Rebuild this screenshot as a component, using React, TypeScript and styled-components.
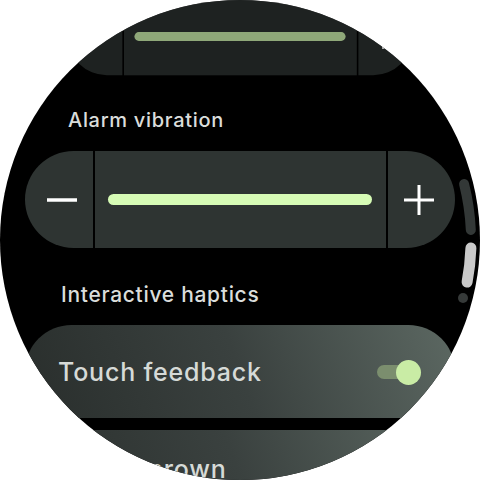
import React from 'react'
import styled, { createGlobalStyle } from 'styled-components'

const GlobalStyle = createGlobalStyle`
  html, body {
    margin: 0;
    padding: 0;
    background: #ffffff;
  }
  * {
    box-sizing: border-box;
  }
`

const Screen = styled.div`
  position: relative;
  width: 480px;
  height: 480px;
  border-radius: 50%;
  overflow: hidden;
  background: #000000;
  font-family: Inter, Roboto, 'Noto Sans', sans-serif;
`

const Column = styled.div`
  display: flex;
  flex-direction: column;
  margin-top: -12px;
  padding: 0 25px;
`

const Slider = styled.div<{ $scale?: number; $dim?: boolean }>`
  display: grid;
  grid-template-columns: 68px 1fr 67px;
  column-gap: 2px;
  height: 97px;
  transform: scale(${(p) => p.$scale ?? 1});
  opacity: ${(p) => (p.$dim ? 0.67 : 1)};
`

const SideButton = styled.div<{ $side: 'left' | 'right' }>`
  display: flex;
  align-items: center;
  justify-content: center;
  background: #2e3432;
  border-radius: ${(p) => (p.$side === 'left' ? '49px 0 0 49px' : '0 49px 49px 0')};
  padding: ${(p) => (p.$side === 'left' ? '0 0 0 6px' : '0 6px 0 0')};
`

const Track = styled.div`
  display: flex;
  align-items: center;
  background: #2e3432;
  padding: 0 14px 0 13px;
`

const Bar = styled.div`
  flex: 1;
  height: 11px;
  border-radius: 6px;
  background: #d6fbb5;
`

const SectionLabel = styled.div<{ $indent: number; $top: number; $bottom: number; $size: number }>`
  padding: ${(p) => `${p.$top}px 0 ${p.$bottom}px ${p.$indent - 25}px`};
  font-size: ${(p) => p.$size}px;
  font-weight: 500;
  line-height: 24px;
  color: #dadddb;
  letter-spacing: 0.7px;
`

const Chip = styled.div<{ $top?: number }>`
  display: flex;
  align-items: ${(p) => (p.$top ? 'flex-start' : 'center')};
  justify-content: space-between;
  height: 93px;
  border-radius: 47px;
  padding: ${(p) => (p.$top ? `${p.$top}px 40px 0 33px` : '0 40px 0 33px')};
  background: linear-gradient(70deg, #292e2c 0%, #3a413f 50%, #5c6862 100%);
`

const ChipLabel = styled.span`
  font-size: 25px;
  font-weight: 500;
  line-height: 30px;
  color: #d6dad7;
  letter-spacing: 0.8px;
`

const Gap = styled.div`
  height: 12px;
`

const Toggle = styled.div`
  position: relative;
  width: 38px;
  height: 14px;
  border-radius: 7px;
  background: #7b8e6e;
`

const Thumb = styled.div`
  position: absolute;
  right: -6px;
  top: -5px;
  width: 25px;
  height: 25px;
  border-radius: 50%;
  background: #c9eca5;
`

const Indicator = styled.svg`
  position: absolute;
  left: 0;
  top: 0;
  pointer-events: none;
`

const arcPoint = (deg: number, r = 231) => {
  const a = (deg * Math.PI) / 180
  return `${(240 + r * Math.cos(a)).toFixed(1)} ${(240 + r * Math.sin(a)).toFixed(1)}`
}

const arc = (from: number, to: number) => `M ${arcPoint(from)} A 231 231 0 0 1 ${arcPoint(to)}`

const Minus = () => (
  <svg width="32" height="32" viewBox="0 0 32 32">
    <line x1="1" y1="16" x2="31" y2="16" stroke="#ffffff" strokeWidth="3.5" />
  </svg>
)

const Plus = () => (
  <svg width="32" height="32" viewBox="0 0 32 32">
    <line x1="1" y1="16" x2="31" y2="16" stroke="#ffffff" strokeWidth="3" />
    <line x1="16" y1="1" x2="16" y2="31" stroke="#ffffff" strokeWidth="3" />
  </svg>
)

const LevelSlider: React.FC<{ scale?: number; dim?: boolean }> = ({ scale, dim }) => (
  <Slider $scale={scale} $dim={dim}>
    <SideButton $side="left">
      <Minus />
    </SideButton>
    <Track>
      <Bar />
    </Track>
    <SideButton $side="right">
      <Plus />
    </SideButton>
  </Slider>
)

export default function App() {
  return (
    <>
      <GlobalStyle />
      <Screen>
        <Column>
          <LevelSlider scale={0.8} dim />
          <SectionLabel $indent={68} $top={23} $bottom={19} $size={20}>
            Alarm vibration
          </SectionLabel>
          <LevelSlider />
          <SectionLabel $indent={61} $top={35} $bottom={18} $size={21}>
            Interactive haptics
          </SectionLabel>
          <Chip>
            <ChipLabel>Touch feedback</ChipLabel>
            <Toggle>
              <Thumb />
            </Toggle>
          </Chip>
          <Gap />
          <Chip $top={24}>
            <ChipLabel>Rotary crown</ChipLabel>
          </Chip>
        </Column>
        <Indicator width="480" height="480" viewBox="0 0 480 480">
          <path d={arc(-14, -2.5)} stroke="#333837" strokeWidth="10" strokeLinecap="round" fill="none" />
          <path d={arc(2, 10.5)} stroke="#c9c9c9" strokeWidth="11" strokeLinecap="round" fill="none" />
          <circle cx="463" cy="298" r="5" fill="#363a39" />
        </Indicator>
      </Screen>
    </>
  )
}
